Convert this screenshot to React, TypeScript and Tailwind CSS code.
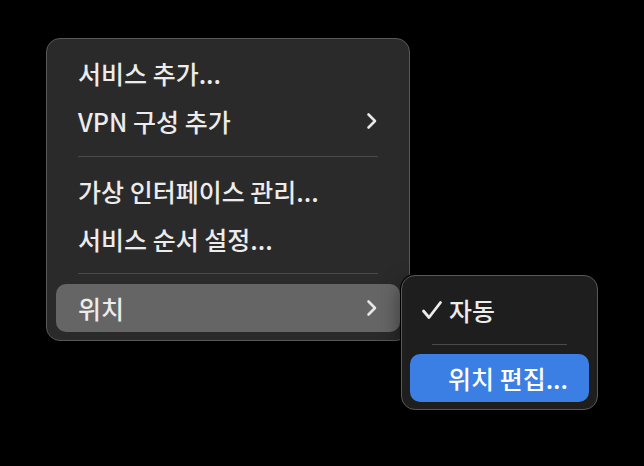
import React from "react";

const font = {
  fontFamily: '"Noto Sans CJK KR", "Inter", "Noto Sans", sans-serif',
};

const Chevron = () => (
  <svg width="12" height="18" viewBox="0 0 12 18" fill="none">
    <path
      d="M2.5 2.5 L9 9 L2.5 15.5"
      stroke="#e6e6e6"
      strokeWidth="2.6"
      strokeLinecap="round"
      strokeLinejoin="round"
    />
  </svg>
);

const Check = () => (
  <svg width="22" height="20" viewBox="0 0 22 20" fill="none">
    <path
      d="M2.5 11 L8 17.5 L19.5 2.5"
      stroke="#ececec"
      strokeWidth="2.8"
      strokeLinecap="round"
      strokeLinejoin="round"
    />
  </svg>
);

const Row: React.FC<{ label: string; sub?: boolean; active?: boolean }> = ({
  label,
  sub,
  active,
}) => (
  <div
    className={`flex h-[48px] items-center justify-between rounded-[10px] pl-[22px] pr-[22px] ${
      active ? "bg-[#656565]" : ""
    }`}
  >
    <span className="text-[25px] font-medium leading-none text-[#ececec]">{label}</span>
    {sub && <Chevron />}
  </div>
);

const Sep: React.FC<{ h: string }> = ({ h }) => (
  <div className={`flex ${h} items-center px-[22px]`}>
    <div className="h-px w-full bg-[#4a4a4a]" />
  </div>
);

export default function App() {
  return (
    <div className="relative h-[466px] w-[644px] overflow-hidden bg-black" style={font}>
      <div className="ml-[46px] pt-[38px]">
        <div className="flex h-[303px] w-[364px] flex-col rounded-[14px] border border-[#585858] bg-[#2a2a2a] px-[9px] pt-[10px] shadow-[0_0_0_1px_#000]">
          <Row label="서비스 추가..." />
          <Row label="VPN 구성 추가" sub />
          <Sep h="h-[22px]" />
          <Row label="가상 인터페이스 관리..." />
          <Row label="서비스 순서 설정..." />
          <Sep h="h-[21px]" />
          <Row label="위치" sub active />
        </div>
      </div>

      <div className="absolute left-[401px] top-[275px] flex h-[135px] w-[197px] flex-col rounded-[14px] border border-[#585858] bg-[#1e1e1e] px-[8px] pt-[10px] shadow-[0_0_0_1px_#000,0_8px_20px_rgba(0,0,0,0.5)]">
        <div className="flex h-[48px] items-center pl-[11px]">
          <Check />
          <span className="ml-[6px] text-[25px] font-medium leading-none text-[#ececec]">자동</span>
        </div>
        <Sep h="h-[20px]" />
        <div className="flex h-[48px] items-center rounded-[10px] bg-[#3b7ee4] pl-[38px]">
          <span className="text-[25px] font-medium leading-none text-white">위치 편집...</span>
        </div>
      </div>
    </div>
  );
}
